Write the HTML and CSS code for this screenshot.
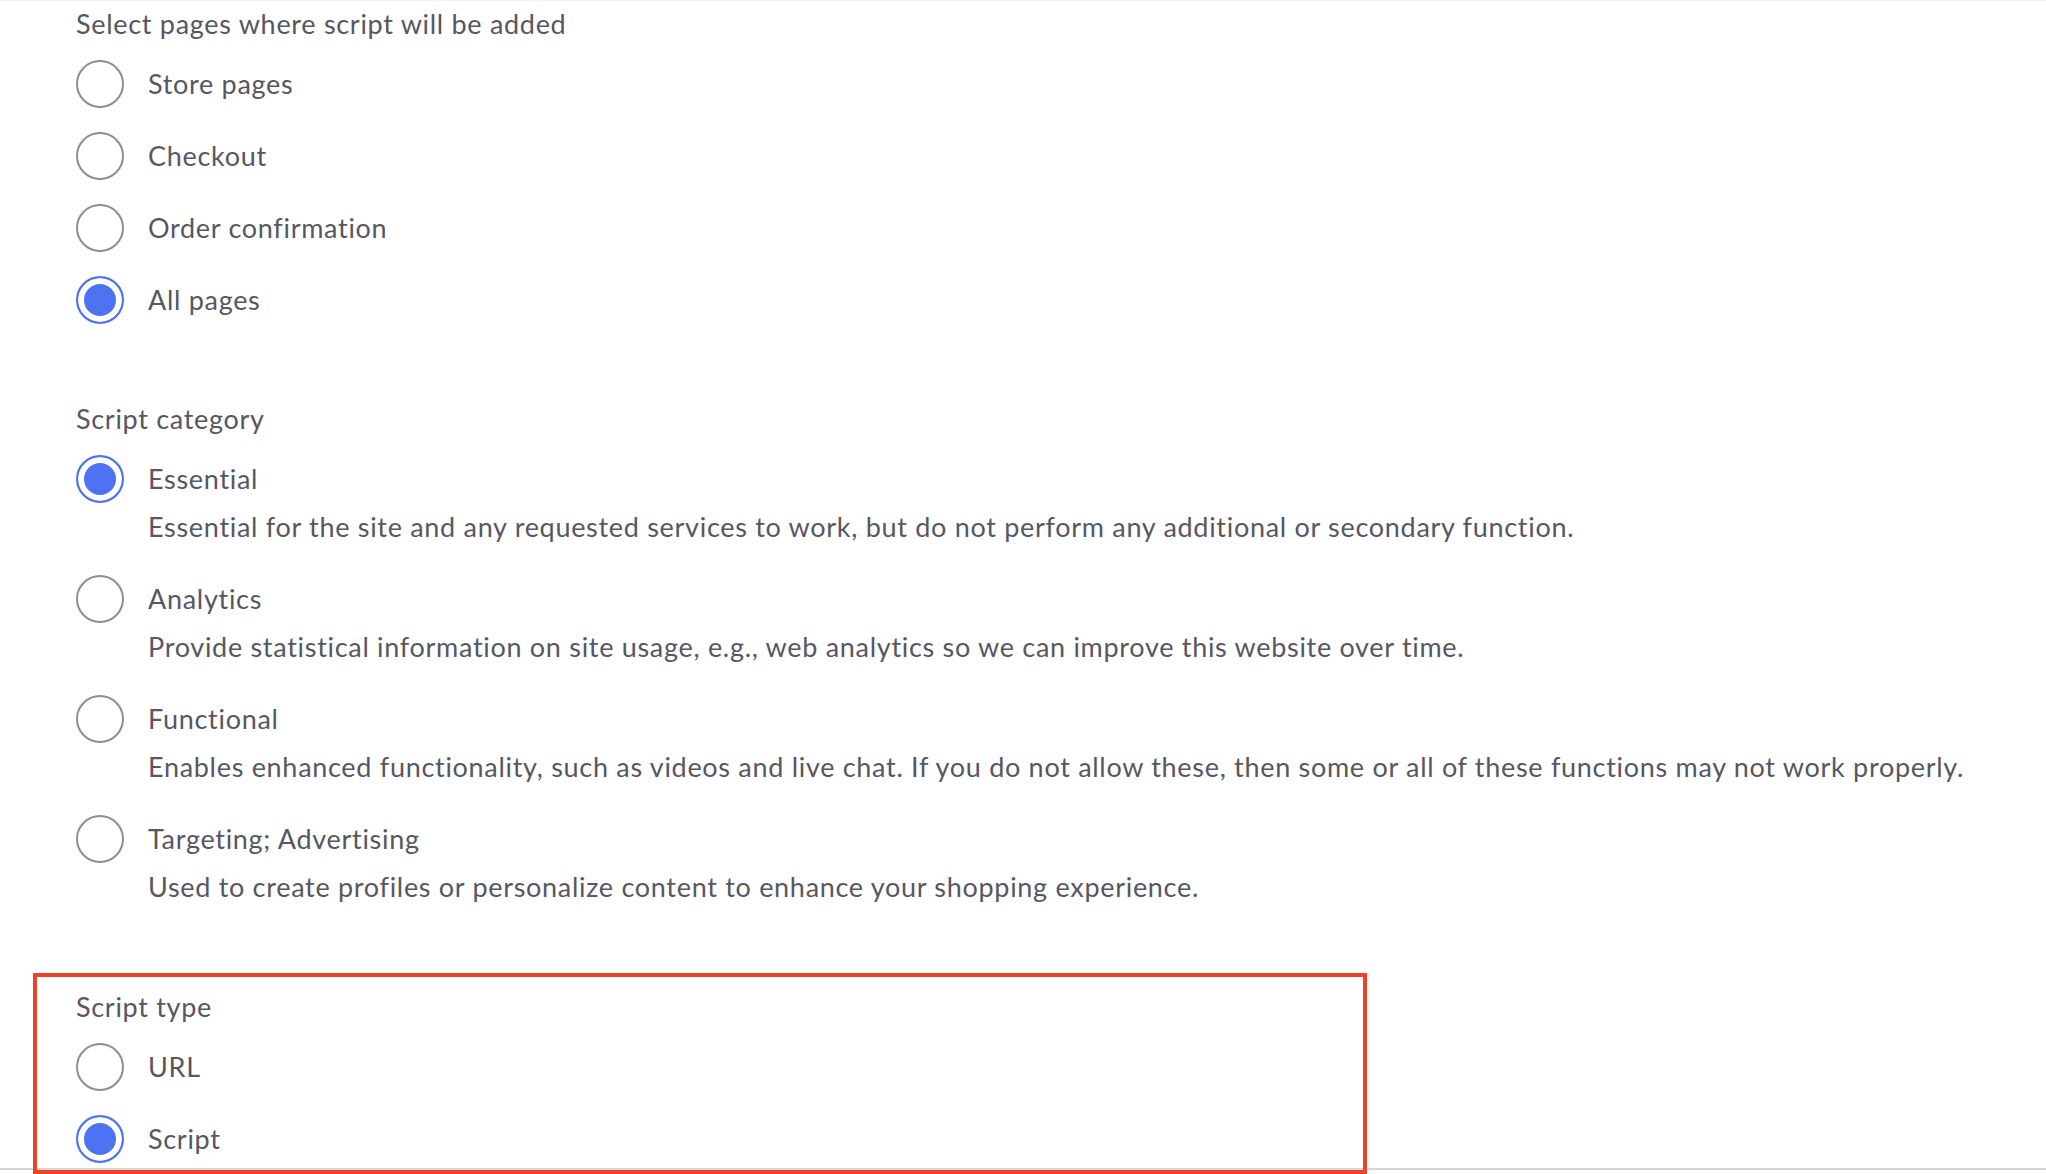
FILE: index.html
```html
<!DOCTYPE html>
<html lang="en">
<head>
<meta charset="utf-8">
<title>Script settings</title>
<link rel="stylesheet" href="styles.css">
</head>
<body>
<main class="form">
  <fieldset class="group">
    <legend class="group-title">Select pages where script will be added</legend>
    <label class="option"><span class="row"><input type="radio" name="pages"><span class="label">Store pages</span></span></label>
    <label class="option"><span class="row"><input type="radio" name="pages"><span class="label">Checkout</span></span></label>
    <label class="option"><span class="row"><input type="radio" name="pages"><span class="label">Order confirmation</span></span></label>
    <label class="option"><span class="row"><input type="radio" name="pages" checked><span class="label">All pages</span></span></label>
  </fieldset>

  <fieldset class="group group-gap">
    <legend class="group-title">Script category</legend>
    <label class="option"><span class="row"><input type="radio" name="cat" checked><span class="label">Essential</span></span><span class="desc">Essential for the site and any requested services to work, but do not perform any additional or secondary function.</span></label>
    <label class="option"><span class="row"><input type="radio" name="cat"><span class="label">Analytics</span></span><span class="desc">Provide statistical information on site usage, e.g., web analytics so we can improve this website over time.</span></label>
    <label class="option"><span class="row"><input type="radio" name="cat"><span class="label">Functional</span></span><span class="desc">Enables enhanced functionality, such as videos and live chat. If you do not allow these, then some or all of these functions may not work properly.</span></label>
    <label class="option"><span class="row"><input type="radio" name="cat"><span class="label">Targeting; Advertising</span></span><span class="desc">Used to create profiles or personalize content to enhance your shopping experience.</span></label>
  </fieldset>

  <fieldset class="group highlight">
    <legend class="group-title">Script type</legend>
    <label class="option"><span class="row"><input type="radio" name="type"><span class="label">URL</span></span></label>
    <label class="option"><span class="row"><input type="radio" name="type" checked><span class="label">Script</span></span></label>
  </fieldset>
</main>
</body>
</html>
```

FILE: styles.css
```css
html, body {
  margin: 0;
  padding: 0;
  background: #ffffff;
}

body {
  font-family: Lato, "Liberation Sans", sans-serif;
  font-size: 27px;
  letter-spacing: 0.7px;
  color: #575762;
  box-shadow: inset 0 1px 0 #f0f0f0;
  height: 1174px;
  overflow: hidden;
}

.form {
  padding-left: 76px;
  height: 1170px;
  box-sizing: border-box;
  border-bottom: 2px solid #d6d6d6;
}

.group {
  border: 0;
  margin: 0;
  padding: 0;
  min-width: 0;
  display: flex;
  flex-direction: column;
}

.group-title {
  float: left;
  padding: 0;
  height: 48px;
  line-height: 48px;
  width: 100%;
}

.group-gap {
  margin-top: 59px;
}

.option {
  display: flex;
  flex-direction: column;
  padding: 12px 0;
  cursor: pointer;
}

.row {
  display: flex;
  align-items: center;
  height: 48px;
  gap: 24px;
}

.label,
.desc {
  line-height: 48px;
  white-space: nowrap;
}

.desc {
  padding-left: 72px;
}

input[type="radio"] {
  appearance: none;
  -webkit-appearance: none;
  margin: 0;
  width: 48px;
  height: 48px;
  flex: none;
  border-radius: 50%;
  border: 2px solid #8e8e8e;
  background: #ffffff;
  box-sizing: border-box;
}

input[type="radio"]:checked {
  border-color: #4e73f2;
  background: #4e73f2;
  box-shadow: inset 0 0 0 6px #ffffff;
}

.highlight {
  margin-top: 50px;
  margin-left: -43px;
  width: 1334px;
  height: 201px;
  box-sizing: border-box;
  border: 4px solid #ea4329;
  padding: 6px 0 0 39px;
  margin-bottom: -3px;
}
```
